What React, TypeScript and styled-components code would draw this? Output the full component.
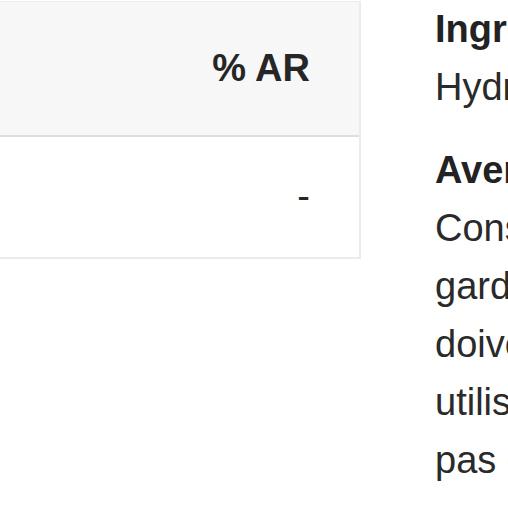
import React from 'react'
import styled, {createGlobalStyle} from 'styled-components'

const GlobalStyle = createGlobalStyle`
  html, body {
    margin: 0;
    padding: 0;
    background: #fff;
  }
  body {
    width: 508px;
    height: 508px;
    overflow: hidden;
    font-family: "Liberation Sans", Arial, Helvetica, sans-serif;
    font-size: 38px;
    line-height: 58px;
    color: #333;
  }
`

const Page = styled.div`
  display: flex;
  align-items: flex-start;
  gap: 74px;
  width: 508px;
  height: 508px;
  overflow: hidden;
`

const NutritionTable = styled.table`
  flex: 0 0 361px;
  width: 361px;
  margin-top: 1px;
  border-collapse: separate;
  border-spacing: 0;
  border-top: 1px solid #ececec;
  border-right: 2px solid #ebebeb;
  border-bottom: 2px solid #ebebeb;
`

const HeadCell = styled.th`
  padding: 38px 49px 38px 0;
  background: #f7f7f7;
  border-bottom: 2px solid #dedede;
  text-align: right;
  font-weight: 700;
  line-height: 57px;
  color: #262626;
`

const BodyCell = styled.td`
  padding: 31px 49px 32px 0;
  background: #fff;
  text-align: right;
  line-height: 57px;
  color: #262626;
`

const Details = styled.div`
  flex: 0 0 auto;
  white-space: nowrap;
  color: #2a2a2a;
`

const Block = styled.p<{$spaced?: boolean}>`
  margin: ${p => (p.$spaced ? '25px' : '0')} 0 0;
`

const Label = styled.strong`
  display: block;
  font-weight: 700;
  color: #222;
`

export default function App() {
  return (
    <>
      <GlobalStyle />
      <Page>
        <NutritionTable>
          <thead>
            <tr>
              <HeadCell>% AR</HeadCell>
            </tr>
          </thead>
          <tbody>
            <tr>
              <BodyCell>-</BodyCell>
            </tr>
          </tbody>
        </NutritionTable>
        <Details>
          <Block>
            <Label>Ingrédients</Label>
            Hydrolysat de collagène, arôme naturel
          </Block>
          <Block $spaced>
            <Label>Avertissements</Label>
            Conserver hors de portée des enfants. À
            <br />
            garder dans un endroit frais et sec. Les
            <br />
            doivent consulter un médecin avant d'
            <br />
            utiliser ce produit. Ne
            <br />
            pas dépasser la dose journalière recommandée.
          </Block>
        </Details>
      </Page>
    </>
  )
}
